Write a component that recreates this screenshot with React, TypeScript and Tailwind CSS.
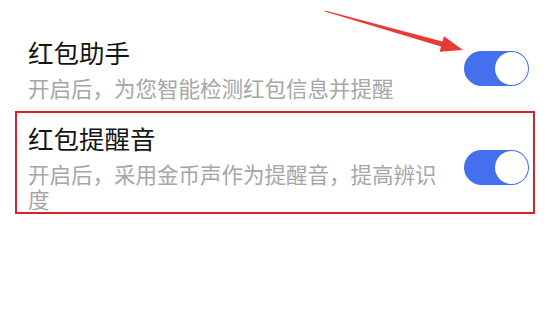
import React from 'react';

const Toggle: React.FC = () => (
  <div className="flex h-[35px] w-[65px] shrink-0 items-center justify-end rounded-full bg-[#4470f0] p-[1px]">
    <div className="h-[33px] w-[33px] rounded-full bg-white" />
  </div>
);

type RowProps = { title: string; desc: string; boxed?: boolean };

const SettingRow: React.FC<RowProps> = ({ title, desc, boxed }) => (
  <div
    className={`flex items-center justify-between border-2 pb-[1px] pl-[11px] pr-[4px] pt-[10px] ${
      boxed ? 'border-[#d6222e]' : 'border-transparent'
    }`}
  >
    <div className="w-[425px]">
      <div className="text-[25.5px] leading-[30px] text-[#141414]">{title}</div>
      <div className="mt-[8px] text-[21.5px] leading-[25px] text-[#a6a6a6]">{desc}</div>
    </div>
    <Toggle />
  </div>
);

const App: React.FC = () => {
  return (
    <div
      className="relative h-[317px] w-[550px] overflow-hidden bg-white"
      style={{ fontFamily: '"Noto Sans CJK SC", "Noto Sans", sans-serif' }}
    >
      <div className="mx-[15px] flex flex-col gap-[8px] pt-[25px]">
        <SettingRow title="红包助手" desc="开启后，为您智能检测红包信息并提醒" />
        <SettingRow title="红包提醒音" desc="开启后，采用金币声作为提醒音，提高辨识度" boxed />
      </div>

      {/* annotation arrow */}
      <svg className="pointer-events-none absolute left-0 top-0" width="550" height="317" viewBox="0 0 550 317">
        <polygon
          points="325.1,10.5 442.5,41.6 444,36.3 463,50 439.6,51.7 441.1,46.4 324.9,11.5"
          fill="#e83a35"
        />
      </svg>
    </div>
  );
};

export default App;
